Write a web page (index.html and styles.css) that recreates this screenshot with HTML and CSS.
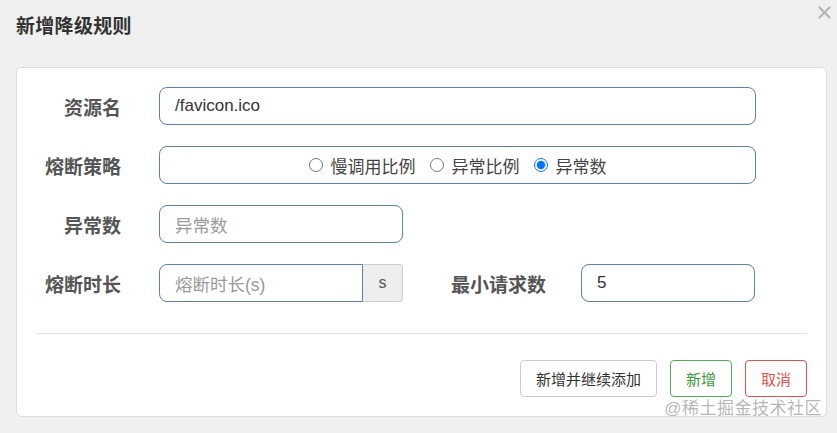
FILE: index.html
```html
<!DOCTYPE html>
<html lang="zh">
<head>
<meta charset="utf-8">
<link rel="stylesheet" href="styles.css">
</head>
<body>
<div class="dialog">
  <div class="header">
    <h1 class="title">新增降级规则</h1>
    <button class="close" aria-label="close">
      <svg width="13" height="13" viewBox="0 0 13 13"><path d="M1.5 1.5 L11.5 11.5 M11.5 1.5 L1.5 11.5" stroke="#b4b4b4" stroke-width="2.2" stroke-linecap="round"/></svg>
    </button>
  </div>
  <div class="card">
    <div class="form">
      <div class="row">
        <label class="label">资源名</label>
        <div class="field w-full"><span class="value">/favicon.ico</span></div>
      </div>
      <div class="row">
        <label class="label">熔断策略</label>
        <div class="field w-full radios">
          <label class="opt"><input type="radio" name="s">慢调用比例</label>
          <label class="opt"><input type="radio" name="s">异常比例</label>
          <label class="opt"><input type="radio" name="s" checked>异常数</label>
        </div>
      </div>
      <div class="row">
        <label class="label">异常数</label>
        <div class="field w-half"><span class="ph">异常数</span></div>
      </div>
      <div class="row">
        <label class="label">熔断时长</label>
        <div class="group">
          <div class="field in-group"><span class="ph">熔断时长(s)</span></div>
          <div class="addon">s</div>
        </div>
        <label class="label2">最小请求数</label>
        <div class="field w-small"><span class="value">5</span></div>
      </div>
    </div>
    <div class="divider"></div>
    <div class="actions">
      <button class="btn">新增并继续添加</button>
      <button class="btn btn-green">新增</button>
      <button class="btn btn-red">取消</button>
    </div>
    <div class="watermark">@稀土掘金技术社区</div>
  </div>
</div>
</body>
</html>
```

FILE: styles.css
```css
* { box-sizing: border-box; }
html, body { margin: 0; padding: 0; }
body {
  background: #f0f0f0;
  font-family: "Liberation Sans", "Noto Sans CJK SC", sans-serif;
  width: 837px;
  height: 433px;
  overflow: hidden;
}
.dialog { position: relative; padding: 0 10px 0 16px; }
.header { height: 67px; padding-top: 14px; }
.title {
  margin: 0;
  font-size: 19px;
  font-weight: bold;
  color: #333;
  line-height: 26px;
  letter-spacing: 0.3px;
}
.close {
  position: absolute;
  top: 6px;
  right: 6px;
  border: 0;
  background: none;
  padding: 0;
  width: 13px;
  height: 13px;
}
.close svg { display: block; }
.card {
  position: relative;
  background: #fff;
  border: 1px solid #dcdcdc;
  border-radius: 5px;
  height: 350px;
  padding-top: 19px;
}
.form { display: flex; flex-direction: column; gap: 21px; }
.row { display: flex; align-items: center; height: 38px; }
.label, .label2 {
  font-size: 19px;
  font-weight: bold;
  color: #555;
}
.label { width: 104px; text-align: right; margin-right: 38px; }
.label2 { margin-left: 48px; margin-right: 35px; }
.field {
  height: 38px;
  border: 1px solid #5f7fa3;
  border-radius: 8px;
  display: flex;
  align-items: center;
  padding: 0 15px;
  font-size: 17px;
  background: #fff;
}
.w-full { width: 597px; }
.w-half { width: 244px; }
.w-small { width: 174px; }
.value { color: #333; }
.ph { color: #9a9a9a; font-size: 17.5px; }
.radios { justify-content: center; color: #444; gap: 0; }
.opt { display: flex; align-items: center; margin: 0 7px; }
.opt input {
  margin: 0 8px 0 0;
  width: 14px;
  height: 14px;
}
.group { display: flex; height: 38px; }
.in-group {
  width: 204px;
  border-radius: 8px 0 0 8px;
}
.addon {
  width: 40px;
  height: 38px;
  background: #eee;
  border: 1px solid #ccc;
  border-left: 0;
  border-radius: 0 4px 4px 0;
  display: flex;
  align-items: center;
  justify-content: center;
  font-size: 16px;
  color: #555;
}
.divider {
  height: 1px;
  background: #e3e3e3;
  margin: 31px 19px 0 19px;
}
.actions {
  display: flex;
  justify-content: flex-end;
  gap: 13px;
  margin: 26px 19px 0 0;
}
.btn {
  height: 37px;
  padding: 0 15px;
  font-family: "Liberation Sans", "Noto Sans CJK SC", sans-serif;
  font-size: 15px;
  color: #333;
  background: #fff;
  border: 1px solid #ccc;
  border-radius: 4px;
}
.btn-green { color: #3c9a3c; border-color: #55ac55; width: 62px; padding: 0; }
.btn-red { color: #d9534f; border-color: #d9534f; width: 62px; padding: 0; }
.watermark {
  position: absolute;
  right: 4px;
  bottom: -3px;
  font-size: 17px;
  color: rgba(150, 150, 150, 0.7);
  letter-spacing: 0.5px;
}
```
